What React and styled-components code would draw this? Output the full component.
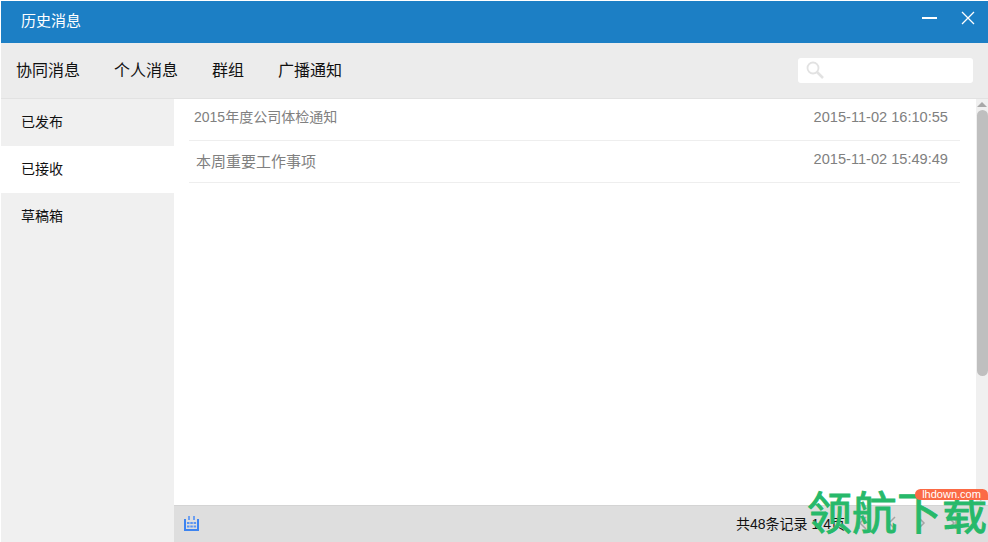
import React from 'react';
import styled, { createGlobalStyle } from 'styled-components';

const GlobalStyle = createGlobalStyle`
  html, body {
    margin: 0;
    padding: 0;
    height: 100%;
    background: #fff;
    overflow: hidden;
  }
  #root {
    height: 100%;
  }
`;

const Window = styled.div`
  position: relative;
  width: 988px;
  height: 542px;
  padding: 1px 0 0 1px;
  box-sizing: border-box;
  display: flex;
  flex-direction: column;
  overflow: hidden;
  background: #fff;
  font-family: "Liberation Sans", "Noto Sans CJK SC", sans-serif;
`;

const TitleBar = styled.div`
  height: 42px;
  flex: none;
  box-sizing: border-box;
  background: #1c7fc5;
  display: flex;
  align-items: center;
  justify-content: space-between;
  padding: 0 13px 5px 20px;
`;

const Title = styled.span`
  font-size: 15px;
  color: #fff;
`;

const WindowButtons = styled.div`
  display: flex;
  align-items: center;
  gap: 24px;
  margin-bottom: 4px;
`;

const Toolbar = styled.div`
  height: 56px;
  flex: none;
  box-sizing: border-box;
  background: #ececec;
  border-bottom: 1px solid #e2e2e2;
  display: flex;
  align-items: center;
  justify-content: space-between;
  padding: 0 15px 3px 15px;
`;

const Tabs = styled.div`
  display: flex;
  gap: 34px;
`;

const Tab = styled.span`
  font-size: 16px;
  color: #111;
`;

const SearchBox = styled.div`
  width: 175px;
  height: 25px;
  margin-top: 2px;
  background: #fff;
  border-radius: 3px;
  display: flex;
  align-items: center;
  padding-left: 8px;
  box-sizing: border-box;
`;

const Body = styled.div`
  flex: 1;
  min-height: 0;
  display: flex;
`;

const Sidebar = styled.div`
  width: 173px;
  flex: none;
  background: #f0f0f0;
`;

const SideItem = styled.div`
  height: 47px;
  display: flex;
  align-items: center;
  padding: 0 0 4px 20px;
  box-sizing: border-box;
  font-size: 14px;
  color: #111;
  background: ${props => (props.$active ? '#fff' : 'transparent')};
`;

const Main = styled.div`
  flex: 1;
  min-width: 0;
  display: flex;
  flex-direction: column;
`;

const ListArea = styled.div`
  flex: 1;
  min-height: 0;
  display: flex;
`;

const List = styled.div`
  flex: 1;
  padding: 0 16px 0 15px;
`;

const Row = styled.div`
  height: 42px;
  border-bottom: 1px solid #eee;
  display: flex;
  justify-content: space-between;
  padding: 10px 12px 0 5px;
  box-sizing: border-box;
  color: #808080;
  font-size: 14.6px;
  line-height: 17px;
`;

const RowTitle = styled.span`
  padding-left: ${props => props.$indent || 0}px;
  padding-top: ${props => props.$drop || 0}px;
  font-size: ${props => props.$size || 14}px;
`;

const Scrollbar = styled.div`
  width: 12px;
  flex: none;
  background: #f0f0f0;
  display: flex;
  flex-direction: column;
  align-items: center;
`;

const ArrowUp = styled.div`
  width: 0;
  height: 0;
  margin-top: 3px;
  border-left: 5px solid transparent;
  border-right: 5px solid transparent;
  border-bottom: 5px solid #a8a8a8;
`;

const Thumb = styled.div`
  width: 11px;
  height: 266px;
  margin-top: 3px;
  background: #bfbfbf;
  border-radius: 6px;
`;

const Footer = styled.div`
  height: 37px;
  flex: none;
  background: #dedede;
  border-top: 1px solid #d4d4d4;
  box-sizing: border-box;
  display: flex;
  align-items: center;
  justify-content: space-between;
  padding: 0 0 2px 10px;
`;

const Pager = styled.div`
  display: flex;
  align-items: center;
  font-size: 14px;
  color: #111;
`;

const PagerInfo = styled.span`
  width: 122px;
  white-space: nowrap;
`;

const PagerButtons = styled.div`
  display: flex;
  align-items: center;
  gap: 20px;
  width: 130px;
`;

const Watermark = styled.div`
  position: absolute;
  right: 0;
  bottom: 0;
  width: 181px;
  height: 54px;
  pointer-events: none;
`;

const WatermarkText = styled.div`
  position: absolute;
  left: 0;
  top: 0;
  font-size: 45px;
  line-height: 54px;
  font-weight: 400;
  -webkit-text-stroke: 1px #27b96a;
  color: #27b96a;
  white-space: nowrap;
`;

const WatermarkBadge = styled.div`
  position: absolute;
  right: 0;
  top: 1px;
  width: 73px;
  height: 11px;
  background: #fb6a45;
  border-radius: 8px 8px 0 8px;
  color: #fff;
  font-size: 11px;
  line-height: 11px;
  text-align: center;
`;

const MinimizeIcon = () => (
  <svg width="15" height="2" viewBox="0 0 15 2"><rect width="15" height="2" fill="#fff" /></svg>
);

const CloseIcon = () => (
  <svg width="14" height="14" viewBox="0 0 14 14">
    <path d="M1 1l12 12M13 1L1 13" stroke="#fff" strokeWidth="1.3" fill="none" />
  </svg>
);

const SearchIcon = () => (
  <svg width="18" height="18" viewBox="0 0 18 18" fill="none" stroke="#e2e2e2">
    <circle cx="7" cy="7" r="5.500" strokeWidth="1.800" />
    <path d="M11 11l6 6" strokeWidth="2.500" />
  </svg>
);

const CalendarIcon = () => (
  <svg width="15" height="15" viewBox="0 0 15 15">
    <path d="M0 3h15v12H0z" fill="#3d84f0" />
    <rect x="2" y="3" width="11" height="10" fill="#dedede" />
    <path d="M4 0h2v4H4zM9 0h2v4H9z" fill="#6d9ff0" />
    <path d="M3 6h2.500v2H3zM6.300 6h2.500v2H6.300zM9.600 6h2.500v2H9.600zM3 9.500h2.500v2H3zM6.300 9.500h2.500v2H6.300zM9.600 9.500h2.500v2H9.600z" fill="#5a95f2" />
  </svg>
);

const Chevrons = ({ d }) => (
  <svg width="10" height="14" viewBox="0 0 10 14" fill="none" stroke="#a5a5a5" strokeWidth="1.500">
    <path d={d} />
  </svg>
);

const tabs = ['协同消息', '个人消息', '群组', '广播通知'];
const folders = ['已发布', '已接收', '草稿箱'];

const App = () => (
  <Window>
    <GlobalStyle />
    <TitleBar>
      <Title>历史消息</Title>
      <WindowButtons>
        <MinimizeIcon />
        <CloseIcon />
      </WindowButtons>
    </TitleBar>
    <Toolbar>
      <Tabs>
        {tabs.map(tab => <Tab key={tab}>{tab}</Tab>)}
      </Tabs>
      <SearchBox>
        <SearchIcon />
      </SearchBox>
    </Toolbar>
    <Body>
      <Sidebar>
        {folders.map(name => (
          <SideItem key={name} $active={name === '已接收'}>{name}</SideItem>
        ))}
      </Sidebar>
      <Main>
        <ListArea>
          <List>
            <Row>
              <RowTitle>2015年度公司体检通知</RowTitle>
              <span>2015-11-02 16:10:55</span>
            </Row>
            <Row>
              <RowTitle $indent={2} $drop={2} $size={15}>本周重要工作事项</RowTitle>
              <span>2015-11-02 15:49:49</span>
            </Row>
          </List>
          <Scrollbar>
            <ArrowUp />
            <Thumb />
          </Scrollbar>
        </ListArea>
        <Footer>
          <CalendarIcon />
          <Pager>
            <PagerInfo>共48条记录 1/4页</PagerInfo>
            <PagerButtons>
              <Chevrons d="M1 1v12M8 1L2 7l6 6" />
              <Chevrons d="M7 1L1 7l6 6" />
              <Chevrons d="M0 1l6 6-6 6" />
              <Chevrons d="M0 1l6 6-6 6M8 1v12" />
            </PagerButtons>
          </Pager>
        </Footer>
      </Main>
    </Body>
    <Watermark>
      <WatermarkText>领航下载</WatermarkText>
      <WatermarkBadge>lhdown.com</WatermarkBadge>
    </Watermark>
  </Window>
);

export default App;
